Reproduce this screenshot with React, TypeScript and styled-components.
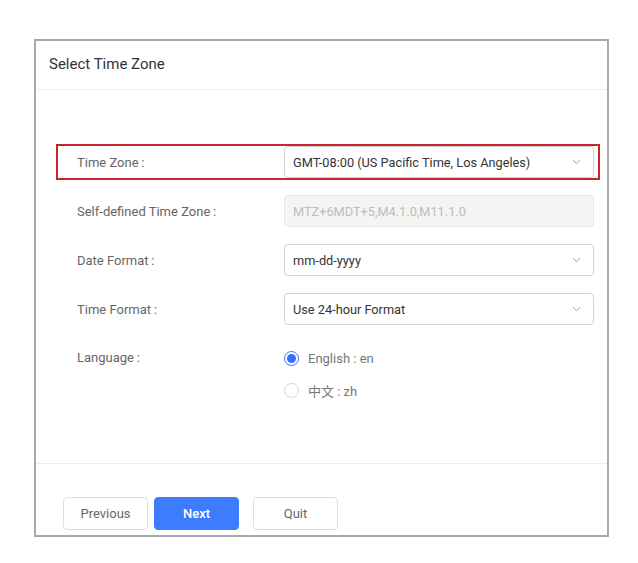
import React, { useState } from "react";
import styled, { createGlobalStyle, css } from "styled-components";

const GlobalStyle = createGlobalStyle`
  html, body {
    margin: 0;
    padding: 0;
    background: #ffffff;
  }
  body {
    font-family: Roboto, "Noto Sans", "Noto Sans CJK SC", sans-serif;
    -webkit-font-smoothing: antialiased;
  }
  * { box-sizing: border-box; }
`;

const Page = styled.div`
  padding: 39px 0 0 34px;
`;

const Dialog = styled.div`
  width: 575px;
  height: 498px;
  border: 2px solid #a8a8a8;
  background: #fff;
  display: flex;
  flex-direction: column;
`;

const Header = styled.div`
  height: 49px;
  flex: none;
  display: flex;
  align-items: center;
  padding-left: 13px;
  padding-bottom: 2px;
  border-bottom: 1px solid #ececec;
  font-size: 15px;
  color: #333;
`;

const Body = styled.div`
  flex: 1;
  display: flex;
  flex-direction: column;
  gap: 13px;
  padding: 54px 0 0 20px;
  border-bottom: 1px solid #ececec;
`;

const Row = styled.div<{ $highlight?: boolean; $top?: boolean }>`
  width: 544px;
  min-height: 36px;
  display: flex;
  align-items: ${(p) => (p.$top ? "flex-start" : "center")};
  border: 2px solid ${(p) => (p.$highlight ? "#c4262e" : "transparent")};
  padding-left: 19px;
`;

const Label = styled.div<{ $top?: boolean }>`
  width: 207px;
  flex: none;
  font-size: 13px;
  color: #666;
  ${(p) =>
    p.$top &&
    css`
      line-height: 32px;
    `}
`;

const Field = styled.div<{ $disabled?: boolean }>`
  width: 310px;
  height: 32px;
  border: 1px solid ${(p) => (p.$disabled ? "#e6e6e6" : "#d2d2d2")};
  border-radius: 4px;
  background: ${(p) => (p.$disabled ? "#f4f4f4" : "#fff")};
  color: ${(p) => (p.$disabled ? "#bdbdbd" : "#333")};
  font-size: 12.75px;
  display: flex;
  align-items: center;
  justify-content: space-between;
  padding: 0 12px 0 8px;
`;

const Chevron = () => (
  <svg width="9" height="6" viewBox="0 0 9 6" fill="none">
    <path d="M1 1.2L4.5 4.6L8 1.2" stroke="#9a9a9a" strokeWidth="1" />
  </svg>
);

const RadioGroup = styled.div`
  display: flex;
  flex-direction: column;
`;

const Option = styled.label`
  height: 32px;
  display: flex;
  align-items: center;
  gap: 9px;
  font-size: 13px;
  color: #777;
  cursor: pointer;
`;

const Dot = styled.span<{ $on: boolean }>`
  width: 15px;
  height: 15px;
  border-radius: 50%;
  flex: none;
  border: 1px solid ${(p) => (p.$on ? "#3370ff" : "#d6d6d6")};
  background: #fff;
  display: flex;
  align-items: center;
  justify-content: center;
  &::after {
    content: "";
    width: 9px;
    height: 9px;
    border-radius: 50%;
    background: ${(p) => (p.$on ? "#3370ff" : "transparent")};
  }
`;

const Footer = styled.div`
  height: 71px;
  flex: none;
  display: flex;
  align-items: flex-start;
  padding: 33px 0 0 27px;
`;

const Button = styled.button<{ $primary?: boolean; $gap?: number }>`
  width: 85px;
  height: 33px;
  margin-right: ${(p) => p.$gap ?? 0}px;
  border-radius: 4px;
  border: 1px solid ${(p) => (p.$primary ? "#3d7bff" : "#dedede")};
  background: ${(p) => (p.$primary ? "#3d7bff" : "#fff")};
  color: ${(p) => (p.$primary ? "#fff" : "#666")};
  font-family: Roboto, "Noto Sans", sans-serif;
  font-size: 13px;
  font-weight: ${(p) => (p.$primary ? 500 : 400)};
  cursor: pointer;
  padding: 0;
`;

const languages = [
  { id: "en", text: "English : en" },
  { id: "zh", text: "中文 : zh" },
];

export default function App() {
  const [lang, setLang] = useState("en");
  return (
    <>
      <GlobalStyle />
      <Page>
        <Dialog>
          <Header>Select Time Zone</Header>
          <Body>
            <Row $highlight>
              <Label>Time Zone{"\u2009"}:</Label>
              <Field>
                <span>GMT-08:00 (US Pacific Time, Los Angeles)</span>
                <Chevron />
              </Field>
            </Row>
            <Row>
              <Label>Self-defined Time Zone{"\u2009"}:</Label>
              <Field $disabled>
                <span>MTZ+6MDT+5,M4.1.0,M11.1.0</span>
              </Field>
            </Row>
            <Row>
              <Label>Date Format{"\u2009"}:</Label>
              <Field>
                <span>mm-dd-yyyy</span>
                <Chevron />
              </Field>
            </Row>
            <Row>
              <Label>Time Format{"\u2009"}:</Label>
              <Field>
                <span>Use 24-hour Format</span>
                <Chevron />
              </Field>
            </Row>
            <Row $top>
              <Label $top>Language{"\u2009"}:</Label>
              <RadioGroup>
                {languages.map((l) => (
                  <Option key={l.id} onClick={() => setLang(l.id)}>
                    <Dot $on={lang === l.id} />
                    {l.text}
                  </Option>
                ))}
              </RadioGroup>
            </Row>
          </Body>
          <Footer>
            <Button $gap={6}>Previous</Button>
            <Button $primary $gap={14}>
              Next
            </Button>
            <Button>Quit</Button>
          </Footer>
        </Dialog>
      </Page>
    </>
  );
}
